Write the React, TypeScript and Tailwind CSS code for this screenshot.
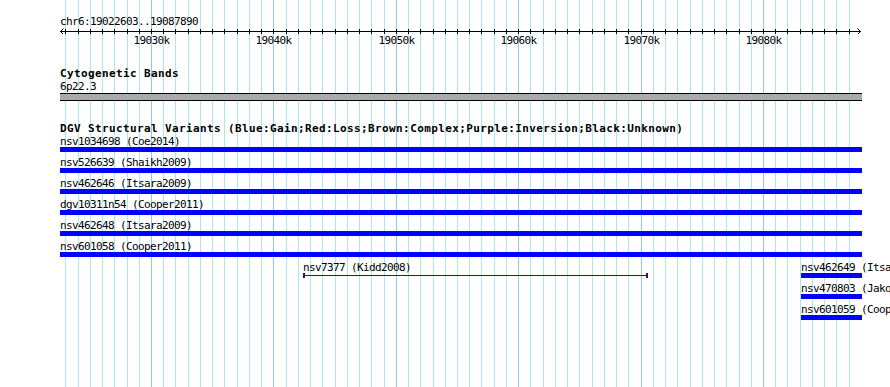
import React from "react";

/* ──────── Types ──────── */
type Feature = {
  name: string;
  x: number; // left edge, px
  w: number; // width, px
  kind: "bar" | "span";
};

const mono = "font-['DejaVu_Sans_Mono','Liberation_Mono',monospace]";
const small = `${mono} text-[11px] leading-[13px] tracking-[-0.62px] text-black whitespace-pre`;
const bold = `${mono} text-[11px] leading-[13px] tracking-[0.38px] font-bold text-black whitespace-pre`;

// 19030k sits at x=151, 12.24 px per kb
const kbToX = (kb: number) => Math.round(151 + (kb - 19030) * 12.24);
const gridKb = Array.from({ length: 65 }, (_, i) => 19023 + i);
const majors = [19030, 19040, 19050, 19060, 19070, 19080];

const PANEL_X = 60;
const PANEL_W = 802;

const rows: Feature[][] = [
  [{ name: "nsv1034698 (Coe2014)", x: 60, w: 802, kind: "bar" }],
  [{ name: "nsv526639 (Shaikh2009)", x: 60, w: 802, kind: "bar" }],
  [{ name: "nsv462646 (Itsara2009)", x: 60, w: 802, kind: "bar" }],
  [{ name: "dgv10311n54 (Cooper2011)", x: 60, w: 802, kind: "bar" }],
  [{ name: "nsv462648 (Itsara2009)", x: 60, w: 802, kind: "bar" }],
  [{ name: "nsv601058 (Cooper2011)", x: 60, w: 802, kind: "bar" }],
  [
    { name: "nsv7377 (Kidd2008)", x: 303, w: 345, kind: "span" },
    { name: "nsv462649 (Itsara2009)", x: 801, w: 61, kind: "bar" },
  ],
  [{ name: "nsv470803 (Jakobsson2008)", x: 801, w: 61, kind: "bar" }],
  [{ name: "nsv601059 (Cooper2011)", x: 801, w: 61, kind: "bar" }],
];

function Ruler() {
  return (
    <svg width={PANEL_W} height={6} className="block" shapeRendering="crispEdges">
      <line x1={0} y1={3.5} x2={PANEL_W - 1} y2={3.5} stroke="#000" />
      {gridKb.map(kb => (
        <line
          key={kb}
          x1={kbToX(kb) - PANEL_X + 0.5}
          y1={1}
          x2={kbToX(kb) - PANEL_X + 0.5}
          y2={6}
          stroke="#000"
        />
      ))}
      <path d="M3.5 0.5 L0.5 3.5 L3.5 6.5" fill="none" stroke="#000" shapeRendering="auto" />
      <path d="M797.5 0.5 L800.5 3.5 L797.5 6.5" fill="none" stroke="#000" shapeRendering="auto" />
    </svg>
  );
}

function FeatureRow({ feats }: { feats: Feature[] }) {
  return (
    <div className="relative h-[21px]">
      {feats.map(f => (
        <div key={f.name} className="absolute top-0" style={{ left: f.x - PANEL_X, width: f.w }}>
          <div className={`${small} h-[12px] leading-[12px]`}>{f.name}</div>
          {f.kind === "bar" ? (
            <div className="h-[5px] bg-[#0000ff]" />
          ) : (
            <div className="relative flex h-[5px] items-center">
              <div className="h-[5px] w-[2px] bg-[#4b0082]" />
              <div className="h-px flex-1 bg-[#4b0082]" />
              <div className="h-[5px] w-[2px] bg-[#4b0082]" />
            </div>
          )}
        </div>
      ))}
    </div>
  );
}

export default function App() {
  return (
    <div className="relative h-[387px] w-[890px] overflow-hidden bg-white">
      {/* grid */}
      <div className="absolute inset-0">
        {gridKb.map(kb => (
          <div
            key={kb}
            className={`absolute top-0 h-full w-px ${majors.includes(kb) ? "bg-[#8ccbee]" : "bg-[#a8e8ef]"}`}
            style={{ left: kbToX(kb) }}
          />
        ))}
      </div>

      <div className="relative ml-[60px] w-[802px] pt-[15px]">
        <div className={small}>chr6:19022603..19087890</div>
        <Ruler />
        <div className="relative h-[13px]">
          {majors.map(kb => (
            <div
              key={kb}
              className={`${small} absolute top-0 -translate-x-1/2`}
              style={{ left: kbToX(kb) - PANEL_X + 0.5 }}
            >
              {kb}k
            </div>
          ))}
        </div>

        <div className={`${bold} mt-[20px]`}>Cytogenetic Bands</div>
        <div className={small}>6p22.3</div>
        <div className="h-[8px] border-y border-black bg-[#aaaaaa]" />

        <div className={`${bold} mt-[21px]`}>
          DGV Structural Variants (Blue:Gain;Red:Loss;Brown:Complex;Purple:Inversion;Black:Unknown)
        </div>
        <div className="flex flex-col">
          {rows.map((r, i) => (
            <FeatureRow key={i} feats={r} />
          ))}
        </div>
      </div>
    </div>
  );
}
